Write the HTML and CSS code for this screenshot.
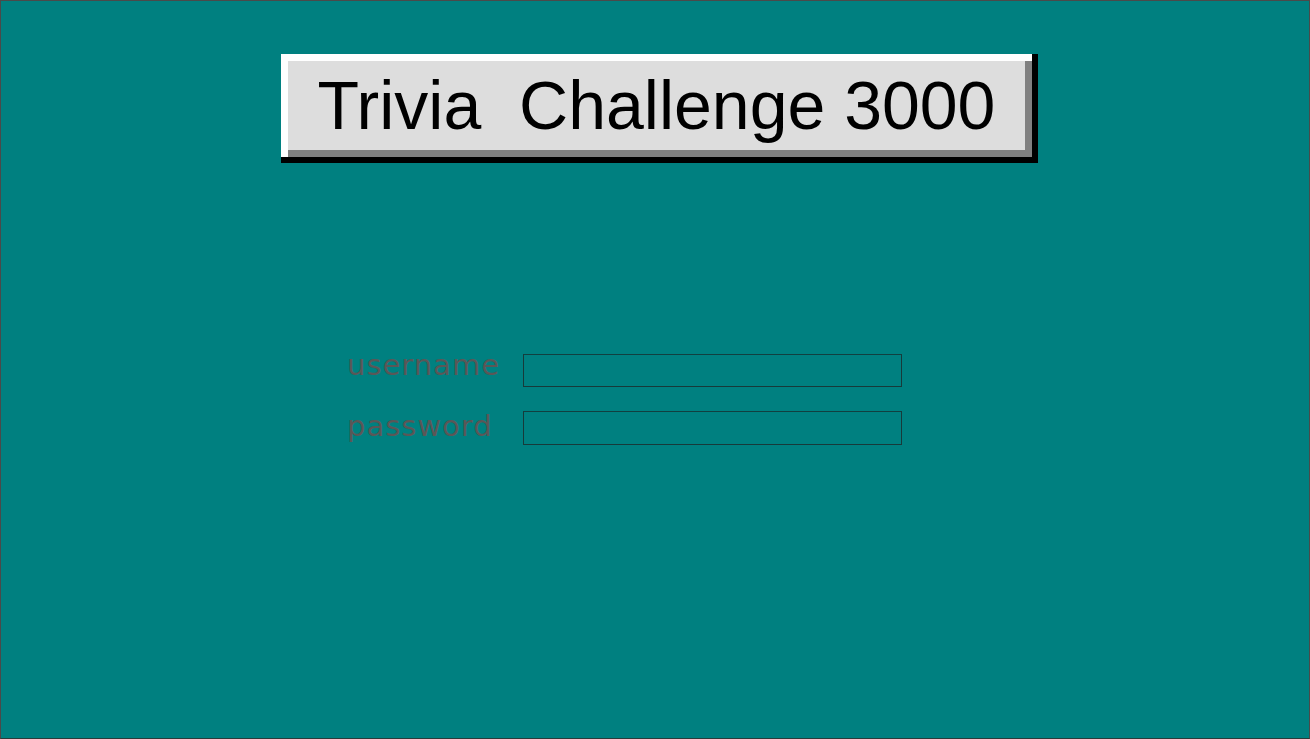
FILE: index.html
```html
<!DOCTYPE html>
<html>
<head>
<meta charset="utf-8">
<title>Trivia Challenge 3000</title>
<link rel="stylesheet" href="styles.css">
</head>
<body>
<div class="page">
  <header class="masthead">
    <div class="title-shadow">
      <h1 class="title">Trivia&nbsp; Challenge 3000</h1>
    </div>
  </header>
  <form class="login">
    <div class="row">
      <label class="label" for="username">username</label>
      <input class="field" id="username" type="text">
    </div>
    <div class="row row-pass">
      <label class="label" for="password">password</label>
      <input class="field" id="password" type="password">
    </div>
  </form>
</div>
</body>
</html>
```

FILE: styles.css
```css
html, body {
  margin: 0;
  padding: 0;
  background: #008080;
}

.page {
  width: 1310px;
  height: 739px;
  box-sizing: border-box;
  border: 1px solid #4a4a4a;
  border-bottom-color: #2a3a3a;
  background: #008080;
  overflow: hidden;
}

.masthead {
  display: flex;
  justify-content: center;
  padding-top: 53px;
  padding-left: 9px;
}

.title-shadow {
  border-right: 6px solid #000;
  border-bottom: 6px solid #000;
}

.title {
  margin: 0;
  padding: 0 37px 7px 30px;
  height: 89px;
  line-height: 89px;
  font-family: "Liberation Sans", Arial, sans-serif;
  font-weight: normal;
  font-size: 68px;
  color: #000;
  background: #dddddd;
  border-top: 7px solid #ffffff;
  border-left: 7px solid #ffffff;
  box-shadow: inset -7px -7px 0 #808080;
  white-space: nowrap;
}

.login {
  margin: 191px 0 0 346px;
  display: flex;
  flex-direction: column;
  gap: 24px;
}

.row {
  display: flex;
  align-items: flex-start;
}

.label {
  width: 176px;
  font-family: "DejaVu Sans", Verdana, sans-serif;
  font-size: 29px;
  letter-spacing: 1px;
  color: #5a5757;
  line-height: 33px;
  position: relative;
  top: -5px;
}

.row-pass .label {
  top: -1px;
}

.field {
  width: 379px;
  height: 33px;
  box-sizing: border-box;
  margin: 0;
  padding: 0 4px;
  background: transparent;
  border: 1px solid #173a3a;
  border-top-color: #114040;
  outline: none;
}

.row-pass .field {
  height: 34px;
}
```
